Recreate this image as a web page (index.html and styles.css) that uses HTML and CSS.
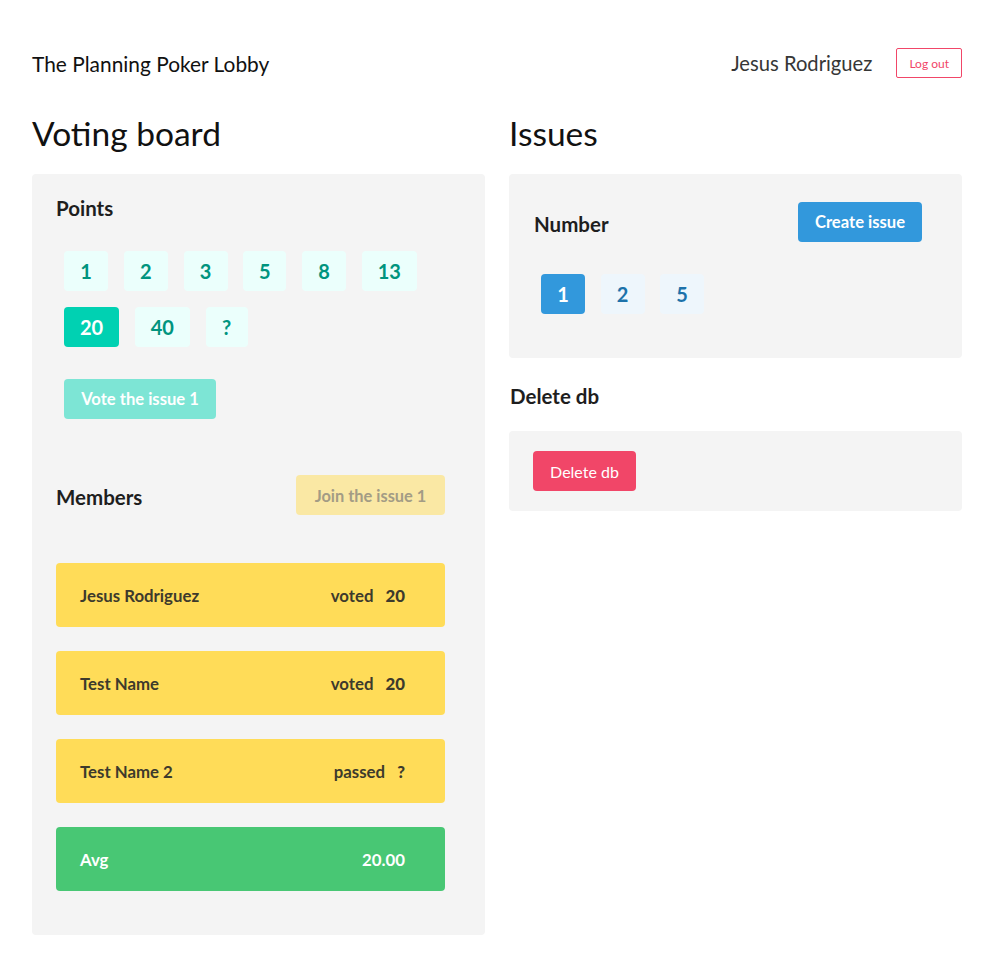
FILE: index.html
```html
<!DOCTYPE html>
<html>
<head>
<meta charset="utf-8">
<link rel="stylesheet" href="styles.css">
</head>
<body>
<div class="page">
  <header class="topbar">
    <div class="brand">The Planning Poker Lobby</div>
    <div class="user">
      <span class="username">Jesus Rodriguez</span>
      <button class="btn-logout">Log out</button>
    </div>
  </header>
  <div class="columns">
    <section class="col">
      <h1 class="title">Voting board</h1>
      <div class="box voting">
        <h2 class="subtitle">Points</h2>
        <div class="points">
          <button class="pt">1</button>
          <button class="pt">2</button>
          <button class="pt">3</button>
          <button class="pt n5">5</button>
          <button class="pt">8</button>
          <button class="pt wide">13</button>
          <button class="pt wide selected">20</button>
          <button class="pt wide">40</button>
          <button class="pt q">?</button>
        </div>
        <button class="btn-vote">Vote the issue 1</button>
        <div class="members-head">
          <h2 class="subtitle nudge">Members</h2>
          <button class="btn-join">Join the issue 1</button>
        </div>
        <div class="members">
          <div class="member"><span>Jesus Rodriguez</span><span class="status">voted <b>20</b></span></div>
          <div class="member"><span>Test Name</span><span class="status">voted <b>20</b></span></div>
          <div class="member"><span>Test Name 2</span><span class="status">passed <b>?</b></span></div>
          <div class="member avg"><span>Avg</span><span class="status">20.00</span></div>
        </div>
      </div>
    </section>
    <section class="col">
      <h1 class="title">Issues</h1>
      <div class="box issues">
        <div class="issues-head">
          <h2 class="subtitle nudge">Number</h2>
          <button class="btn-create">Create issue</button>
        </div>
        <div class="issue-nums">
          <button class="num selected">1</button>
          <button class="num">2</button>
          <button class="num">5</button>
        </div>
      </div>
      <h2 class="subtitle del-title">Delete db</h2>
      <div class="box deldb">
        <button class="btn-delete">Delete db</button>
      </div>
    </section>
  </div>
</div>
</body>
</html>
```
FILE: styles.css
```css
* { box-sizing: border-box; }
body {
  margin: 0;
  font-family: "Lato", "Noto Sans", sans-serif;
  color: #363636;
  background: #fff;
}
button { font-family: inherit; border: none; cursor: pointer; }
.page { padding: 48px 25px 40px 32px; }
.topbar {
  display: flex;
  justify-content: space-between;
  align-items: center;
  height: 30px;
}
.brand { font-size: 20.9px; color: #111; }
.user { display: flex; align-items: center; gap: 24px; }
.username { font-size: 20.2px; color: #363636; }
.btn-logout {
  height: 30px;
  padding: 0 12px;
  background: #fff;
  border: 1px solid #f14668;
  color: #f14668;
  border-radius: 2px;
  font-size: 12px;
}
.columns {
  display: grid;
  grid-template-columns: 453px 453px;
  gap: 24px;
  margin-top: 35px;
}
.title {
  margin: 0 0 21px;
  font-size: 33.5px;
  line-height: 40px;
  font-weight: 400;
  color: #111;
}
.box {
  background: #f4f4f4;
  border-radius: 4px;
}
.subtitle {
  margin: 0;
  font-size: 20.5px;
  line-height: 24px;
  font-weight: 700;
  color: #1e1e1e;
}
.subtitle.nudge { padding-top: 4px; }
.voting { padding: 22px 40px 44px 24px; }
.points {
  display: flex;
  flex-wrap: wrap;
  gap: 16px 15.75px;
  margin: 31px 0 0 8px;
  width: 370px;
}
.pt {
  height: 40px;
  width: 44px;
  border-radius: 4px;
  background: #ebfffc;
  color: #00947e;
  font-size: 20px;
  font-weight: 700;
}
.pt.n5 { width: 43px; }
.pt.wide { width: 55px; }
.pt.q { width: 42px; }
.pt.selected { background: #00d1b2; color: #fff; }
.btn-vote {
  display: block;
  margin: 32px 0 0 8px;
  height: 40px;
  width: 152px;
  padding: 0;
  border-radius: 4px;
  background: #7de5d5;
  color: #fff;
  font-size: 16.6px;
  font-weight: 700;
}
.members-head {
  display: flex;
  justify-content: space-between;
  align-items: center;
  margin-top: 56px;
}
.btn-join {
  height: 40px;
  width: 149px;
  border-radius: 4px;
  background: #fae8a4;
  color: #a39c85;
  font-size: 16.4px;
  font-weight: 700;
}
.members {
  display: flex;
  flex-direction: column;
  gap: 24px;
  margin-top: 48px;
}
.member {
  height: 64px;
  display: flex;
  justify-content: space-between;
  align-items: center;
  padding: 0 40px 0 24px;
  background: #ffdc58;
  border-radius: 4px;
  color: #3d3a2c;
  font-size: 16.8px;
  font-weight: 700;
}
.status b { margin-left: 8px; }
.member.avg { background: #48c774; color: #fff; }
.issues { padding: 28px 40px 44px 25px; }
.issues-head {
  display: flex;
  justify-content: space-between;
  align-items: center;
}
.btn-create {
  height: 40px;
  width: 124px;
  border-radius: 4px;
  background: #3298dc;
  color: #fff;
  font-size: 16.6px;
  font-weight: 700;
}
.issue-nums {
  display: flex;
  gap: 15.5px;
  margin: 32px 0 0 7px;
}
.num {
  width: 44px;
  height: 40px;
  border-radius: 4px;
  background: #eef6fc;
  color: #1d72aa;
  font-size: 20px;
  font-weight: 700;
}
.num.selected { background: #3298dc; color: #fff; }
.del-title { margin: 26px 0 23px 1px; }
.deldb { padding: 20px 24px; }
.btn-delete {
  height: 40px;
  width: 103px;
  padding: 0;
  border-radius: 4px;
  background: #f14668;
  color: #fff;
  font-size: 16px;
}
```
